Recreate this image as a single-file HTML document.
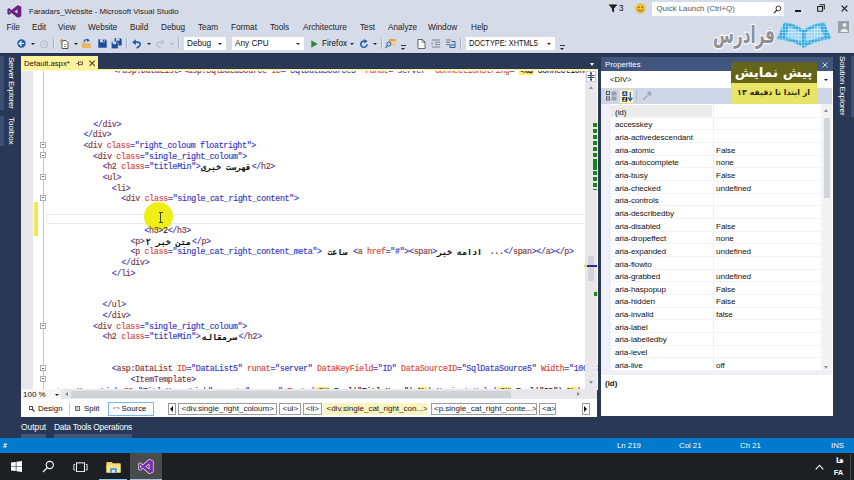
<!DOCTYPE html>
<html lang="en">
<head>
<meta charset="utf-8">
<title>Faradars_Website - Microsoft Visual Studio</title>
<style>
*{box-sizing:border-box;margin:0;padding:0}
html,body{width:854px;height:480px;overflow:hidden;background:#293955}
body{position:relative;font-family:"Liberation Sans","DejaVu Sans",sans-serif;font-size:7.8px;color:#1e1e1e;line-height:1}
.a{position:absolute;white-space:nowrap}
#top{left:0;top:0;width:854px;height:54px;background:#d6dbe9;border-bottom:1px solid #22304e}
.menu span{position:absolute;top:24px;font-size:8.2px;color:#1b1b1b}
#title{left:29px;top:7.5px;font-size:7.8px;color:#1b1b1b}
.combo{background:#fff;height:13px;top:37px;font-size:8.2px;padding:2.5px 0 0 3px;color:#111}
.combo:after{content:"";position:absolute;right:4px;top:5.5px;border:2px solid transparent;border-top:2.5px solid #222}
.tri{width:0;height:0;border:2.2px solid transparent;border-top:2.6px solid #222}
.sep{top:38px;width:1px;height:11px;background:#a3aec8;box-shadow:1px 0 0 #e9ecf5}
/* editor */
#tab{left:21px;top:56px;width:77px;height:13px;background:#fff29d;font-size:7.7px;padding:3.6px 0 0 3px;color:#111}
#edtop{left:21px;top:69px;width:577px;height:2px;background:linear-gradient(#fff29d 0,#fff29d 50%,#fffad6 50%)}
#editor{left:21px;top:71px;width:577px;height:319px;background:#fff;overflow:hidden}
#gut{left:0;top:0;width:12px;height:319px;background:#e6e7e8}
.code{font-family:"Liberation Mono","DejaVu Sans Mono","DejaVu Sans",monospace;font-size:8.3px;letter-spacing:-0.315px;line-height:10.63px;height:10.63px;white-space:pre;position:absolute;color:#222;margin-top:1.6px;-webkit-text-stroke:0.15px}
.t{color:#863536}.at{color:#da4438}.v{color:#3636c0}.p{color:#3c3cc2}
.fa{font-family:"DejaVu Sans Mono","DejaVu Sans",monospace;font-weight:bold;color:#111;font-size:8.3px;letter-spacing:0;-webkit-text-stroke:0.1px;display:inline-block;direction:rtl;white-space:pre;vertical-align:top}
.ob{position:absolute;left:19px;width:6px;height:6px;border:1px solid #adadad;background:#fff;margin-top:0}
.ob:after{content:"";position:absolute;left:1px;top:1.5px;width:2px;height:1px;background:#666}
/* props */
#props{left:601px;top:58px;width:232px;height:358px;background:#fff}
#ptitle{left:0;top:-1px;width:232px;height:14px;background:#41567f;color:#fff;font-size:7.8px;padding:3.6px 0 0 4px}
#pcombo{left:0;top:13px;width:231px;height:17px;background:#fff;font-size:7.6px;padding:5px 0 0 9px;color:#111}
#ptool{left:0;top:30px;width:231px;height:16px;background:#cfd6e5}
.pr{position:absolute;left:10px;width:211px;height:12.65px;border-bottom:1px solid #f3f3f3;font-size:8.1px;letter-spacing:-0.06px;color:#111}
.pr b{position:absolute;left:4px;top:3.5px;font-weight:normal}
.pr i{position:absolute;left:105px;top:3.5px;font-style:normal}

/* scrollbars & bottom */
#vsb{left:585px;top:71px;width:12px;height:319px;background:#e8e8ec}
#hrow{left:21px;top:389px;width:576px;height:10.5px;background:#e8e8ec}
#vbar{left:21px;top:401px;width:576px;height:16px;background:#fff;font-size:7.9px;color:#111}
.cr{position:absolute;top:1.5px;height:12.5px;border:1px solid #9b9b9b;background:#fff;font-size:8px;padding:1.8px 0 0 2.5px;white-space:nowrap;overflow:hidden;color:#222}
.btab{position:absolute;top:423px;font-size:8.4px;color:#fff}
.bstrip{position:absolute;top:434px;height:4px;background:#40567a}
#status{left:0;top:438px;width:854px;height:15px;background:#007acc;color:#fff;font-size:7.8px}
#status span{position:absolute;top:4px}
#task{left:0;top:453px;width:854px;height:27px;background:#1d2023}
.vt{position:absolute;color:#fff;font-size:8px;writing-mode:vertical-rl;white-space:nowrap}
</style>
</head>
<body>
<div class="a" id="top">
<svg class="a" style="left:7px;top:4.5px" width="15" height="13" viewBox="0 0 30 28" preserveAspectRatio="none"><path d="M21.5 1 L28 4 V24 L21.5 27 L9 16.5 L4 20.5 L1.5 19.2 V8.8 L4 7.5 L9 11.5 Z M21.5 8.5 L14 14 L21.5 19.5 Z M4 11.2 V16.8 L7 14 Z" fill="#6a2280" fill-rule="evenodd" stroke="#6a2280" stroke-width="1.2" stroke-linejoin="round"/></svg>
<div class="a" id="title">Faradars_Website - Microsoft Visual Studio</div>
<div class="menu"><span style="left:6.6px">File</span><span style="left:32px">Edit</span><span style="left:58px">View</span><span style="left:88px">Website</span><span style="left:130px">Build</span><span style="left:161px">Debug</span><span style="left:198px">Team</span><span style="left:231px">Format</span><span style="left:270px">Tools</span><span style="left:303px">Architecture</span><span style="left:360px">Test</span><span style="left:388px">Analyze</span><span style="left:428px">Window</span><span style="left:471px">Help</span></div>
<!-- right of title -->
<svg class="a" style="left:608px;top:4px" width="10" height="9" viewBox="0 0 10 9"><path d="M0.5 0.5 H9.5 L6 4.5 V8.5 L4 7 V4.5 Z" fill="#1e1e1e"/></svg>
<div class="a" style="left:619px;top:4.5px;font-size:8.2px;color:#111">3</div>
<svg class="a" style="left:634.5px;top:3px" width="11" height="11" viewBox="0 0 11 11"><circle cx="5.5" cy="5.5" r="5.2" fill="#f2c037"/><circle cx="3.7" cy="4.2" r="0.8" fill="#6b4a12"/><circle cx="7.3" cy="4.2" r="0.8" fill="#6b4a12"/><path d="M2.8 6.4 C4 8.6 7 8.6 8.2 6.4" fill="none" stroke="#6b4a12" stroke-width="0.9"/></svg>
<div class="a" style="left:652px;top:2px;width:132px;height:14px;background:#fff;font-size:7.85px;color:#555;padding:3.2px 0 0 4.5px">Quick Launch (Ctrl+Q)</div>
<svg class="a" style="left:772.5px;top:4.5px" width="9" height="9" viewBox="0 0 9 9"><circle cx="5.4" cy="3.4" r="2.4" fill="none" stroke="#333" stroke-width="1"/><path d="M3.8 5.2 L1 8" stroke="#333" stroke-width="1.3"/></svg>
<div class="a" style="left:795px;top:10px;width:6px;height:2px;background:#1e1e1e"></div>
<svg class="a" style="left:817px;top:4px" width="8" height="8" viewBox="0 0 8 8"><path d="M2.5 0.7 H7.3 V5.5 M0.7 2.5 H5.5 V7.3 H0.7 Z" fill="none" stroke="#1e1e1e" stroke-width="1.1"/></svg>
<svg class="a" style="left:841px;top:4.5px" width="7" height="7" viewBox="0 0 7 7"><path d="M0.6 0.6 L6.4 6.4 M6.4 0.6 L0.6 6.4" stroke="#1e1e1e" stroke-width="1.3"/></svg>
<!-- toolbar -->
<div class="a" style="left:9px;top:38px;width:3px;height:11px;background-image:radial-gradient(#8a93a8 0.6px,transparent 0.7px);background-size:2px 2px"></div>
<svg class="a" style="left:17px;top:39px" width="9" height="9" viewBox="0 0 9 9"><circle cx="4.5" cy="4.5" r="4.2" fill="#1f5fae"/><path d="M4.6 2.2 L2.3 4.5 L4.6 6.8 M2.5 4.5 H7" stroke="#fff" stroke-width="1.2" fill="none"/></svg>
<div class="a tri" style="left:31px;top:43px"></div>
<svg class="a" style="left:39.5px;top:39.5px" width="8.6" height="8.6" viewBox="0 0 9 9"><circle cx="4.5" cy="4.5" r="3.8" fill="#d6dbe9" stroke="#b0b5c2" stroke-width="1"/><path d="M4.4 2.6 L6.4 4.5 L4.4 6.4 M6.2 4.5 H2.5" stroke="#c3c7d2" stroke-width="1" fill="none"/></svg>
<div class="a sep" style="left:53px"></div>
<svg class="a" style="left:59px;top:38px" width="10" height="11" viewBox="0 0 10 11"><path d="M3 2.5 H7 L9 4.5 V10.5 H3 Z" fill="#fff" stroke="#444" stroke-width="0.9"/><path d="M0.8 3 H4.8 M2.8 1 V5" stroke="#c8862a" stroke-width="1.2"/><path d="M5 8.5 H7.5 M5 6.5h2.5" stroke="#777" stroke-width="0.7"/></svg>
<div class="a tri" style="left:74px;top:43px"></div>
<svg class="a" style="left:81px;top:38px" width="11" height="11" viewBox="0 0 11 11"><path d="M1 10 V4.5 H4.5 L5.5 5.5 H10 V10 Z" fill="#e8b765"/><path d="M3 3.8 C3.5 1.5 6 1 7.5 2.2" stroke="#1f5fae" stroke-width="1.2" fill="none"/><path d="M6.3 0.5 L9 2.8 L5.8 3.8 Z" fill="#1f5fae"/></svg>
<svg class="a" style="left:97.5px;top:39px" width="9" height="9" viewBox="0 0 9 9"><path d="M0.3 0.3 H7.2 L8.7 1.8 V8.7 H0.3 Z" fill="#1b4c9a"/><rect x="2" y="0.3" width="4.6" height="3" fill="#d6dbe9"/><rect x="4.8" y="0.8" width="1.1" height="2" fill="#1b4c9a"/></svg>
<svg class="a" style="left:111px;top:38px" width="11" height="11" viewBox="0 0 11 11"><path d="M3.5 0.3 H9.5 L10.7 1.5 V7.5 H3.5 Z" fill="#1b4c9a"/><rect x="5" y="0.3" width="3.6" height="2.4" fill="#d6dbe9"/><path d="M0.3 3.8 H6 L7.2 5 V10.7 H0.3 Z" fill="#1b4c9a" stroke="#d6dbe9" stroke-width="0.6"/><rect x="1.8" y="4" width="3.3" height="2.2" fill="#d6dbe9"/></svg>
<div class="a sep" style="left:126px"></div>
<svg class="a" style="left:132px;top:38.5px" width="10" height="10" viewBox="0 0 10 10"><path d="M2.2 3.2 H6 C8.4 3.2 8.8 6 7.2 7.2 L4.6 9.2" stroke="#1f5fae" stroke-width="1.7" fill="none"/><path d="M0.2 3.2 L3.8 0.2 V6.2 Z" fill="#1f5fae"/></svg>
<div class="a tri" style="left:147px;top:43px"></div>
<svg class="a" style="left:155px;top:38.5px" width="10" height="10" viewBox="0 0 10 10"><path d="M7.8 3.2 H4 C1.6 3.2 1.2 6 2.8 7.2 L5.4 9.2" stroke="#bcc1cf" stroke-width="1.5" fill="none"/><path d="M9.8 3.2 L6.2 0.2 V6.2 Z" fill="#bcc1cf"/></svg>
<div class="a tri" style="left:170px;top:43px;border-top-color:#a9aebb"></div>
<div class="a sep" style="left:178px"></div>
<div class="a combo" style="left:184px;width:42px">Debug</div>
<div class="a combo" style="left:232px;width:72px">Any CPU</div>
<svg class="a" style="left:311px;top:39.5px" width="7" height="8" viewBox="0 0 7 8"><path d="M0.3 0.2 L6.7 4 L0.3 7.8 Z" fill="#2f8a2f"/></svg>
<div class="a" style="left:322px;top:39.5px;font-size:8.2px;color:#111">Firefox</div>
<div class="a tri" style="left:350px;top:43px"></div>
<svg class="a" style="left:359px;top:38.5px" width="10" height="10" viewBox="0 0 10 10"><path d="M8 5.2 A3.1 3.1 0 1 1 5.8 2.2" stroke="#1f5fae" stroke-width="1.6" fill="none"/><path d="M4.8 0 L8.6 2 L5.4 4.6 Z" fill="#1f5fae"/></svg>
<div class="a tri" style="left:373px;top:43px"></div>
<div class="a sep" style="left:381px"></div>
<svg class="a" style="left:385px;top:38px" width="11" height="11" viewBox="0 0 11 11"><rect x="4" y="1" width="6.5" height="6.5" fill="#e8a33a"/><rect x="6" y="3" width="4.5" height="4.5" fill="#f4cf8d"/><circle cx="3.8" cy="6" r="2" fill="#d6dbe9" stroke="#1f5fae" stroke-width="1"/><path d="M2.4 7.6 L0.5 10" stroke="#1f5fae" stroke-width="1.2"/></svg>
<div class="a" style="left:401px;top:45px;width:5px;height:1px;background:#333"></div><div class="a tri" style="left:401px;top:47.5px"></div>
<div class="a" style="left:410px;top:38px;width:3px;height:11px;background-image:radial-gradient(#8a93a8 0.6px,transparent 0.7px);background-size:2px 2px"></div>
<svg class="a" style="left:417px;top:38.5px" width="9" height="10" viewBox="0 0 9 10"><path d="M1 0.5 H5.5 L8 3 V9.5 H1 Z" fill="#fff" stroke="#555" stroke-width="0.9"/><path d="M5.2 0.5 V3.3 H8" fill="none" stroke="#555" stroke-width="0.8"/></svg>
<svg class="a" style="left:431px;top:39px" width="10" height="9" viewBox="0 0 10 9"><path d="M1 1 H9 M4 3.3 H9 M4 5.6 H9 M1 8 H9" stroke="#777" stroke-width="0.9"/><path d="M0.5 3 L2.8 4.5 L0.5 6 Z" fill="#999"/></svg>
<svg class="a" style="left:445px;top:39px" width="11" height="9" viewBox="0 0 11 9"><path d="M1 1 H6 M1 3.3 H5 M1 5.6 H4" stroke="#666" stroke-width="0.9"/><path d="M6.5 2.5 H10 V8.5 H5 V5" stroke="#1f5fae" stroke-width="1" fill="none"/><path d="M6 6 h3" stroke="#444" stroke-width="1"/></svg>
<div class="a sep" style="left:460px"></div>
<div class="a combo" style="left:466px;width:89px"><span style="display:inline-block;transform:scaleX(0.9);transform-origin:0 0">DOCTYPE: XHTML5</span></div>
<div class="a" style="left:560px;top:45px;width:5px;height:1px;background:#333"></div><div class="a tri" style="left:560px;top:47.5px"></div>
<!-- logo overlay -->
<div class="a" style="left:838px;top:21px;width:11px;height:12px;background:#9a9fa8"></div>
<svg class="a" style="left:838px;top:21px" width="11" height="12" viewBox="0 0 11 12"><circle cx="6.5" cy="4" r="2" fill="#e9ecf2"/><path d="M2.5 11 C2.5 6.5 10 6.5 10 11 Z" fill="#e9ecf2"/></svg>
</div>
<div class="a" id="tab">Default.aspx*</div>
<svg class="a" style="left:75.5px;top:60px" width="7" height="7" viewBox="0 0 7 7"><path d="M0.3 3.5 H2.6 M2.6 1.2 V5.8 M2.6 2 H6.4 M2.6 4.6 H6.4 M6.4 1.6 V5" stroke="#444" stroke-width="0.8" fill="none"/></svg>
<svg class="a" style="left:88.5px;top:60px" width="6.5" height="6.5" viewBox="0 0 7 7"><path d="M0.6 0.6 L6.4 6.4 M6.4 0.6 L0.6 6.4" stroke="#4a4210" stroke-width="1.2"/></svg>
<div class="a" id="edtop"></div>
<div class="a" style="left:589.5px;top:63px;width:0;height:0;border:2.8px solid transparent;border-top:3px solid #fff;border-bottom:0"></div>
<div class="a" id="editor">
<div class="a" id="gut"></div>
<div class="a" style="left:13px;top:131px;width:4px;height:33.5px;background:#f4e75a"></div>
<div class="a" style="left:21.5px;top:0;width:1px;height:319px;background:#c6c6c6"></div>
<div class="ob" style="top:70.8px"></div>
<div class="ob" style="top:81.4px"></div>
<div class="ob" style="top:102.7px"></div>
<div class="ob" style="top:123.9px"></div>
<div class="ob" style="top:251.5px"></div>
<div class="ob" style="top:294.0px"></div>
<div class="ob" style="top:304.6px"></div>
<div class="a" style="left:25px;top:142.5px;width:541px;height:10px;border:1px solid #e9e9e9"></div>
<div class="a" style="left:122.8px;top:131px;width:29.2px;height:29.2px;border-radius:50%;background:#eeee18"></div>
<div class="a" style="left:139px;top:141px;width:1px;height:10.5px;background:#45450e"></div><div class="a" style="left:137.5px;top:141px;width:4px;height:1px;background:#45450e"></div><div class="a" style="left:137.5px;top:151px;width:4px;height:1px;background:#45450e"></div>
<div class="code" style="left:92.0px;top:-6.2px"><span class="p">&lt;/</span><span class="t">asp:DataList</span><span class="p">&gt;</span><span class="p">&lt;</span><span class="t">asp:SqlDataSource</span> <span class="at">ID</span><span class="p">=</span><span class="v">"SqlDataSource5"</span> <span class="at">runat</span><span class="p">=</span><span class="v">"server"</span> <span class="at">ConnectionString</span><span class="p">=</span>"<span style="background:#ffee62">&lt;%$</span> ConnectionStrings:ConnectionString %>"</div>
<div class="code" style="left:72.2px;top:47.19px"><span class="p">&lt;/</span><span class="t">div</span><span class="p">&gt;</span></div>
<div class="code" style="left:62.4px;top:57.81px"><span class="p">&lt;/</span><span class="t">div</span><span class="p">&gt;</span></div>
<div class="code" style="left:62.4px;top:68.44px"><span class="p">&lt;</span><span class="t">div</span> <span class="at">class</span><span class="p">=</span><span class="v">"right_coloum floatright"</span><span class="p">&gt;</span></div>
<div class="code" style="left:72.0px;top:79.07px"><span class="p">&lt;</span><span class="t">div</span> <span class="at">class</span><span class="p">=</span><span class="v">"single_right_coloum"</span><span class="p">&gt;</span></div>
<div class="code" style="left:81.5px;top:89.71px"><span class="p">&lt;</span><span class="t">h2</span> <span class="at">class</span><span class="p">=</span><span class="v">"titleMin"</span><span class="p">&gt;</span><span class="fa" style="width:51.2px;text-align:center">فهرست خبری</span><span class="p">&lt;/</span><span class="t">h2</span><span class="p">&gt;</span></div>
<div class="code" style="left:81.5px;top:100.34px"><span class="p">&lt;</span><span class="t">ul</span><span class="p">&gt;</span></div>
<div class="code" style="left:90.8px;top:110.97px"><span class="p">&lt;</span><span class="t">li</span><span class="p">&gt;</span></div>
<div class="code" style="left:100.3px;top:121.60px"><span class="p">&lt;</span><span class="t">div</span> <span class="at">class</span><span class="p">=</span><span class="v">"single_cat_right_content"</span><span class="p">&gt;</span></div>
<div class="code" style="left:123.3px;top:153.49px"><span class="p">&lt;</span><span class="t">h3</span><span class="p">&gt;</span>2<span class="p">&lt;/</span><span class="t">h3</span><span class="p">&gt;</span></div>
<div class="code" style="left:109.5px;top:164.12px"><span class="p">&lt;</span><span class="t">p</span><span class="p">&gt;</span><span class="fa" style="width:47.6px;text-align:center">متن خبر ۲</span><span class="p">&lt;/</span><span class="t">p</span><span class="p">&gt;</span></div>
<div class="code" style="left:109.5px;top:174.75px"><span class="p">&lt;</span><span class="t">p</span> <span class="at">class</span><span class="p">=</span><span class="v">"single_cat_right_content_meta"</span><span class="p">&gt;</span><span class="fa" style="width:31.2px;text-align:center">ساعت</span><span class="p">&lt;</span><span class="t">a</span> <span class="at">href</span><span class="p">=</span><span class="v">"#"</span><span class="p">&gt;</span><span class="p">&lt;</span><span class="t">span</span><span class="p">&gt;</span><span class="fa" style="width:48.5px;text-align:left">ادامه خبر</span><span style="display:inline-block;width:18.2px;text-align:right">...</span><span class="p">&lt;/</span><span class="t">span</span><span class="p">&gt;</span><span class="p">&lt;/</span><span class="t">a</span><span class="p">&gt;</span><span class="p">&lt;/</span><span class="t">p</span><span class="p">&gt;</span></div>
<div class="code" style="left:100.3px;top:185.38px"><span class="p">&lt;/</span><span class="t">div</span><span class="p">&gt;</span></div>
<div class="code" style="left:90.8px;top:196.01px"><span class="p">&lt;/</span><span class="t">li</span><span class="p">&gt;</span></div>
<div class="code" style="left:81.5px;top:227.90px"><span class="p">&lt;/</span><span class="t">ul</span><span class="p">&gt;</span></div>
<div class="code" style="left:81.5px;top:238.53px"><span class="p">&lt;/</span><span class="t">div</span><span class="p">&gt;</span></div>
<div class="code" style="left:72.0px;top:249.16px"><span class="p">&lt;</span><span class="t">div</span> <span class="at">class</span><span class="p">=</span><span class="v">"single_right_coloum"</span><span class="p">&gt;</span></div>
<div class="code" style="left:81.5px;top:259.79px"><span class="p">&lt;</span><span class="t">h2</span> <span class="at">class</span><span class="p">=</span><span class="v">"titleMin"</span><span class="p">&gt;</span><span class="fa" style="width:38px;text-align:center">سرمقاله</span><span class="p">&lt;/</span><span class="t">h2</span><span class="p">&gt;</span></div>
<div class="code" style="left:90.8px;top:291.68px"><span class="p">&lt;</span><span class="t">asp:DataList</span> <span class="at">ID</span><span class="p">=</span><span class="v">"DataList5"</span> <span class="at">runat</span><span class="p">=</span><span class="v">"server"</span> <span class="at">DataKeyField</span><span class="p">=</span><span class="v">"ID"</span> <span class="at">DataSourceID</span><span class="p">=</span><span class="v">"SqlDataSource5"</span> <span class="at">Width</span><span class="p">=</span><span class="v">"100%"</span><span class="p">&gt;</span></div>
<div class="code" style="left:109.5px;top:302.31px"><span class="p">&lt;</span><span class="t">ItemTemplate</span><span class="p">&gt;</span></div>
<div class="code" style="left:33.0px;top:314.2px"><span class="p">&lt;</span><span class="t">asp:HyperLink</span> <span class="at">ID</span><span class="p">=</span><span class="v">"TitleHyperLink"</span> <span class="at">runat</span><span class="p">=</span><span class="v">"server"</span> <span class="at">Text</span><span class="p">=</span><span class="v">'</span><span style="background:#ffee62">&lt;%#</span> Eval("TitleNews") <span style="background:#ffee62">%&gt;</span><span class="v">'</span> <span class="at">NavigateUrl</span><span class="p">=</span><span class="v">'</span><span style="background:#ffee62">&lt;%#</span> Eval("ID") <span style="background:#ffee62">%&gt;</span><span class="v">'</span> <span class="p">/&gt;</span></div>
</div>
<div class="a" id="vsb">
<div class="a" style="left:1px;top:0;width:10px;height:11px;background:#fff;border:1px solid #c9ccd6"></div>
<svg class="a" style="left:1px;top:0" width="10" height="11" viewBox="0 0 10 11"><path d="M1.5 4.6 H8.5 M1.5 6.6 H8.5" stroke="#2f3f60" stroke-width="1"/><path d="M5 1.2 V9.8" stroke="#2f3f60" stroke-width="1"/><path d="M3.6 3 L5 1 L6.4 3 Z M3.6 8 L5 10 L6.4 8 Z" fill="#2f3f60"/></svg>
<div class="a" style="left:3.5px;top:14.5px;width:0;height:0;border:2.5px solid transparent;border-bottom:3px solid #8e939f;border-top:0"></div>
<div class="a" style="left:8px;top:52px;width:4px;height:66.5px;background:repeating-linear-gradient(#108a10 0,#108a10 3.7px,#e8e8ec 3.7px,#e8e8ec 6px)"></div><div class="a" style="left:8px;top:90px;width:4px;height:9px;background:#108a10"></div>
<div class="a" style="left:2.5px;top:184.5px;width:6px;height:25px;background:#d2d3d9"></div>
<div class="a" style="left:0;top:194px;width:12px;height:1.5px;background:#2a2a9a"></div>
<div class="a" style="left:-1px;top:193.5px;width:2.5px;height:2.5px;background:#e8d23a"></div>
<div class="a" style="left:8.5px;top:220.5px;width:3px;height:4px;background:#108a10"></div>
<div class="a" style="left:3.5px;top:310px;width:0;height:0;border:2.5px solid transparent;border-top:3px solid #8e939f;border-bottom:0"></div>
</div>
<div class="a" id="hrow">
<div class="a" style="left:0;top:0;width:40px;height:10.5px;background:#f6f6f6"></div>
<div class="a" style="left:2px;top:1.5px;font-size:8px;color:#111">100 %</div>
<div class="a tri" style="left:34.2px;top:4.5px"></div>
<div class="a" style="left:43.5px;top:3px;width:0;height:0;border:2.6px solid transparent;border-right:3.2px solid #868999;border-left:0"></div>
<div class="a" style="left:50px;top:1.5px;width:440px;height:7.5px;background:#d0d1d7"></div>
<div class="a" style="left:556px;top:3px;width:0;height:0;border:2.6px solid transparent;border-left:3.2px solid #868999;border-right:0"></div>
</div>
<div class="a" style="left:21px;top:399px;width:576px;height:3px;background:#fff"></div>
<div class="a" id="vbar">
<svg class="a" style="left:8px;top:5px" width="6" height="6" viewBox="0 0 6 6"><path d="M0.5 0.5 H3.5 V3.5 H0.5 Z" fill="none" stroke="#444" stroke-width="1"/><path d="M3 3 L5.5 5.5" stroke="#444" stroke-width="1.2"/></svg>
<div class="a" style="left:17px;top:3.5px">Design</div>
<div class="a" style="left:47.5px;top:2px;width:1px;height:12px;background:#c8c8c8"></div>
<div class="a" style="left:54px;top:5px;width:5px;height:5px;border:1px solid #777;background:#ccc"></div>
<div class="a" style="left:63px;top:3.5px">Split</div>
<div class="a" style="left:86.5px;top:0.5px;width:46px;height:14px;border:1px solid #7eb4ea;background:#fff"></div>
<div class="a" style="left:92px;top:5px;font-size:5.5px;color:#333;letter-spacing:0.3px">&lt;&gt;</div>
<div class="a" style="left:100.5px;top:3.5px">Source</div>
<div class="a" style="left:147px;top:1.5px;width:8px;height:12.5px;border:1px solid #9b9b9b;background:#fff"></div>
<div class="a" style="left:149px;top:4.5px;width:0;height:0;border:3px solid transparent;border-right:3.6px solid #111;border-left:0"></div>
<div class="cr" style="left:157px;width:98.5px">&lt;div.single_right_coloum&gt;</div>
<div class="cr" style="left:258px;width:21.5px">&lt;ul&gt;</div>
<div class="cr" style="left:281.5px;width:19.5px">&lt;li&gt;</div>
<div class="cr" style="left:302px;width:105px;background:#fdf4bf;border-color:#fdf4bf">&lt;div.single_cat_right_con...&gt;</div>
<div class="cr" style="left:409.5px;width:106px">&lt;p.single_cat_right_conte...&gt;</div>
<div class="cr" style="left:517.5px;width:17px">&lt;a&gt;</div>
<div class="a" style="left:560.5px;top:1.5px;width:8px;height:12.5px;border:1px solid #9b9b9b;background:#fff"></div>
<div class="a" style="left:563px;top:4.5px;width:0;height:0;border:3px solid transparent;border-left:3.6px solid #111;border-right:0"></div>
</div>
<div class="btab" style="left:21px">Output</div><div class="btab" style="left:54px;letter-spacing:-0.22px">Data Tools Operations</div>
<div class="bstrip" style="left:21px;width:25px"></div><div class="bstrip" style="left:54px;width:78px"></div>
<div class="a" id="status"><span style="left:3px;top:3.5px;font-size:7px;font-weight:bold">#</span><span style="left:617px">Ln 219</span><span style="left:679px">Col 21</span><span style="left:740px">Ch 21</span><span style="left:831px">INS</span></div>
<div class="a" id="task">
<div class="a" style="left:130px;top:0;width:32px;height:27px;background:#4a4b4d"></div>
<div class="a" style="left:99px;top:25.5px;width:28px;height:1.5px;background:#8cc8f4"></div>
<div class="a" style="left:130px;top:25.5px;width:32px;height:1.5px;background:#9fc4e2"></div>
<svg class="a" style="left:10.5px;top:8px" width="11.5" height="11" viewBox="0 0 23 22"><path d="M0 3.2 L9.5 1.8 V10.4 H0 Z M10.8 1.6 L23 0 V10.4 H10.8 Z M0 11.6 H9.5 V20.2 L0 18.8 Z M10.8 11.6 H23 V22 L10.8 20.4 Z" fill="#fff"/></svg>
<svg class="a" style="left:42px;top:7px" width="13" height="13" viewBox="0 0 13 13"><circle cx="7.8" cy="5" r="3.6" fill="none" stroke="#fff" stroke-width="1.1"/><path d="M5.3 7.6 L1 12" stroke="#fff" stroke-width="1.2"/></svg>
<svg class="a" style="left:72.5px;top:8.5px" width="15" height="10.5" viewBox="0 0 17 12" preserveAspectRatio="none"><rect x="4" y="1" width="9" height="10" fill="none" stroke="#fff" stroke-width="1.1"/><path d="M2.5 2.8 H1 V9.2 H2.5 M14.5 2.8 H16 V9.2 H14.5" fill="none" stroke="#fff" stroke-width="1"/></svg>
<svg class="a" style="left:106px;top:7.5px" width="15" height="12.5" viewBox="0 0 16 14" preserveAspectRatio="none"><path d="M0.5 1 H6 L7.5 2.5 H15.5 V13 H0.5 Z" fill="#f5cf5a"/><path d="M0.5 4 H15.5 V13 H0.5 Z" fill="#fbe38a"/><rect x="4.5" y="8" width="7" height="5" fill="#3a9fe0"/><rect x="6.5" y="10" width="3" height="3" fill="#d9efff"/></svg>
<svg class="a" style="left:138px;top:5.5px" width="16" height="15" viewBox="0 0 30 28"><path d="M21.5 1 L28 4 V24 L21.5 27 L9 16.5 L4 20.5 L1.5 19.2 V8.8 L4 7.5 L9 11.5 Z M21.5 8.5 L14 14 L21.5 19.5 Z M4 11.2 V16.8 L7 14 Z" fill="#7a30ad" fill-rule="evenodd" stroke="#fff" stroke-width="2.2" paint-order="stroke fill" stroke-linejoin="round"/></svg>
<svg class="a" style="left:814.5px;top:11px" width="9" height="6" viewBox="0 0 9 6"><path d="M0.7 5.3 L4.5 1.2 L8.3 5.3" fill="none" stroke="#fff" stroke-width="1.1"/></svg>
<div class="a" style="left:836px;top:3.5px;font-size:7.5px;color:#fff;font-family:'DejaVu Sans',sans-serif;font-weight:bold">فا</div>
<div class="a" style="left:833.8px;top:15.8px;font-size:7.6px;color:#fff;font-weight:bold;letter-spacing:-0.3px">FA</div>
<div class="a" style="left:850px;top:1px;width:1px;height:26px;background:#484b4e"></div>
</div>
<div class="a" id="props">
<div class="a" id="ptitle">Properties</div>
<div class="a tri" style="left:210px;top:5.5px;border-top-color:#fff"></div>
<svg class="a" style="left:221px;top:3.5px" width="6" height="6" viewBox="0 0 6 6"><path d="M0.5 0.5 L5.5 5.5 M5.5 0.5 L0.5 5.5" stroke="#d8deec" stroke-width="1"/></svg>
<div class="a" id="pcombo">&lt;DIV&gt;</div><div class="a tri" style="left:223px;top:20.5px"></div>
<div class="a" id="ptool">
<svg class="a" style="left:5px;top:3px" width="11" height="10" viewBox="0 0 11 10"><rect x="0.5" y="0.5" width="3" height="3" fill="none" stroke="#555" stroke-width="0.9"/><rect x="0.5" y="6" width="3" height="3" fill="none" stroke="#555" stroke-width="0.9"/><rect x="5.5" y="0.5" width="5" height="4" fill="#9aa0ab"/><rect x="5.5" y="5.5" width="5" height="4" fill="#9aa0ab"/></svg>
<div class="a" style="left:18px;top:0.5px;width:15px;height:15px;background:#fdf4bf;border:1px solid #efd88f"></div>
<svg class="a" style="left:20.5px;top:2.5px" width="11" height="11" viewBox="0 0 11 11"><rect x="0.3" y="0.3" width="5" height="4.6" fill="#1f3f8a"/><rect x="0.3" y="6" width="5" height="4.6" fill="#222"/><path d="M1.6 4 L2.8 1.2 L4 4 M1.9 3.1 H3.7" stroke="#fff" stroke-width="0.7" fill="none"/><path d="M1.5 7.2 H4 L1.5 9.6 H4" stroke="#fff" stroke-width="0.8" fill="none"/><path d="M8.3 1 V9 M6.2 6.6 L8.3 9.6 L10.4 6.6" stroke="#1f5fae" stroke-width="1.3" fill="none"/></svg>
<div class="a" style="left:34.5px;top:2px;width:1px;height:12px;background:#b4bdd0"></div>
<svg class="a" style="left:40.5px;top:3px" width="10" height="10" viewBox="0 0 10 10"><path d="M1.2 8.8 L5.4 4.6" stroke="#a4aab8" stroke-width="1.6"/><path d="M5 2.2 A2.4 2.4 0 1 1 7.8 5 L6 4 Z" fill="#a4aab8"/></svg>
</div>
<div class="a" style="left:0;top:46px;width:10px;height:270px;background:#eef0f6"></div>
<div class="pr" style="top:47.20px;background:linear-gradient(90deg,#ececec 0,#ececec 101.5px,#fff 101.5px)"><b>(id)</b></div>
<div class="pr" style="top:59.85px"><b>accesskey</b></div>
<div class="pr" style="top:72.50px"><b>aria-activedescendant</b></div>
<div class="pr" style="top:85.15px"><b>aria-atomic</b><i>False</i></div>
<div class="pr" style="top:97.80px"><b>aria-autocomplete</b><i>none</i></div>
<div class="pr" style="top:110.45px"><b>aria-busy</b><i>False</i></div>
<div class="pr" style="top:123.10px"><b>aria-checked</b><i>undefined</i></div>
<div class="pr" style="top:135.75px"><b>aria-controls</b></div>
<div class="pr" style="top:148.40px"><b>aria-describedby</b></div>
<div class="pr" style="top:161.05px"><b>aria-disabled</b><i>False</i></div>
<div class="pr" style="top:173.70px"><b>aria-dropeffect</b><i>none</i></div>
<div class="pr" style="top:186.35px"><b>aria-expanded</b><i>undefined</i></div>
<div class="pr" style="top:199.00px"><b>aria-flowto</b></div>
<div class="pr" style="top:211.65px"><b>aria-grabbed</b><i>undefined</i></div>
<div class="pr" style="top:224.30px"><b>aria-haspopup</b><i>False</i></div>
<div class="pr" style="top:236.95px"><b>aria-hidden</b><i>False</i></div>
<div class="pr" style="top:249.60px"><b>aria-invalid</b><i>false</i></div>
<div class="pr" style="top:262.25px"><b>aria-label</b></div>
<div class="pr" style="top:274.90px"><b>aria-labelledby</b></div>
<div class="pr" style="top:287.55px"><b>aria-level</b></div>
<div class="pr" style="top:300.20px"><b>aria-live</b><i>off</i></div>
<div class="a" style="left:111.5px;top:46px;width:1px;height:266px;background:#f0f0f0"></div>
<div class="a" style="left:220px;top:46px;width:11px;height:270px;background:#f3f3f6"></div>
<div class="a" style="left:223px;top:51px;width:0;height:0;border:2.5px solid transparent;border-bottom:3px solid #8e939f;border-top:0"></div>
<div class="a" style="left:222.5px;top:59.5px;width:6px;height:80.5px;background:#d3d4d9"></div>
<div class="a" style="left:223px;top:308px;width:0;height:0;border:2.5px solid transparent;border-top:3px solid #8e939f;border-bottom:0"></div>
<div class="a" style="left:0;top:313px;width:231px;height:4px;background:#eef0f6"></div>
<div class="a" style="left:4px;top:322px;font-size:7.9px;font-weight:bold;color:#111">(id)</div>
</div>
<div class="a" style="left:731px;top:62px;width:86px;height:21px;background:#64641a"></div>
<div class="a" style="left:731px;top:83px;width:86px;height:21px;background:#e8e465"></div>
<div class="a" dir="rtl" style="left:731px;top:63px;width:85px;text-align:center;font-family:'DejaVu Sans',sans-serif;font-weight:bold;font-size:13.5px;color:#fff;line-height:19px">پیش نمایش</div>
<div class="a" dir="rtl" style="left:731px;top:86px;width:85px;text-align:center;font-family:'DejaVu Sans',sans-serif;font-weight:bold;font-size:7.9px;color:#2a2a12;line-height:14px">از ابتدا تا دقیقه ۱۳</div>
<svg class="a" style="left:706px;top:18px" width="76" height="36" viewBox="0 0 76 36"><text id="lg" x="38" y="21.6" text-anchor="middle" direction="rtl" font-family="'DejaVu Sans',sans-serif" font-weight="bold" font-size="20" fill="#8f9095" stroke="#fafbfd" stroke-width="2.2" paint-order="stroke fill" transform="translate(38 0) scale(0.76 1.18) translate(-38 0)">فرادرس</text></svg>
<svg class="a" style="left:776px;top:20px" width="58" height="30" viewBox="0 0 58 30"><defs><pattern id="chk" width="3.2" height="3.2" patternUnits="userSpaceOnUse" patternTransform="translate(0.4 0.2)"><rect width="3.2" height="3.2" fill="#a9dcf4"/><rect width="2.5" height="2.5" fill="#2fa3e0"/></pattern></defs><path d="M7.75 1.9 C14 2.2 22 5 27.75 9.4 C34 5 42 2.2 48.6 1.9 L56 19 C44 20.5 34 24 27.75 28.6 C22 24 12 20.5 0.25 19.4 Z" fill="url(#chk)" stroke="#bfe6f8" stroke-width="0.8"/><path d="M12.75 6.5 L25.7 11.9 V21.5 L9.8 17.3 Z M29.8 11.9 L43.2 5.7 L48.2 16.5 L29.8 21.5 Z" fill="#fff" fill-opacity="0.5"/></svg>
<div class="a" style="left:0;top:56px;width:4px;height:54px;background:#3d4f76"></div><div class="a" style="left:0;top:116px;width:4px;height:30px;background:#3d4f76"></div>
<div class="vt" style="left:7px;top:56.5px;letter-spacing:-0.26px">Server Explorer</div>
<div class="vt" style="left:7px;top:117px">Toolbox</div>
<div class="a" style="left:851px;top:55.5px;width:3px;height:61px;background:#3d4f76"></div>
<div class="vt" style="left:838.3px;top:56.3px;letter-spacing:-0.08px">Solution Explorer</div>
</body>
</html>
